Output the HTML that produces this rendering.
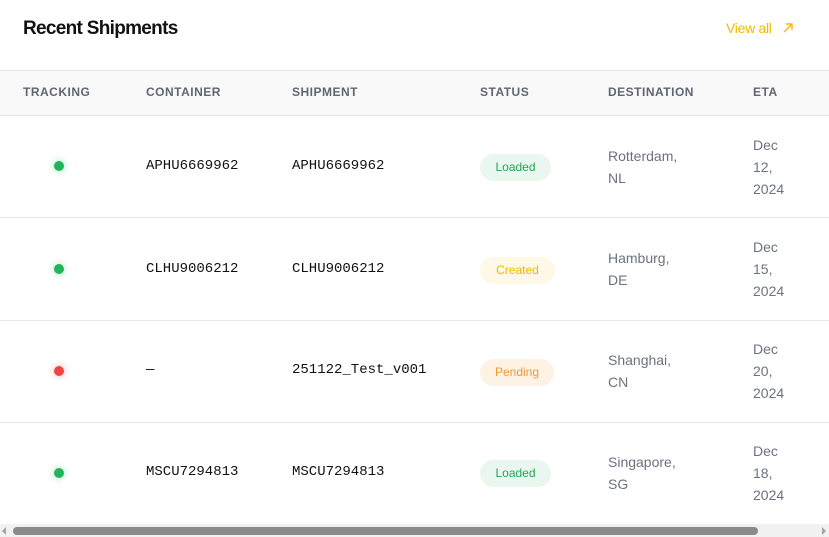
<!DOCTYPE html>
<html><head><style>
*{margin:0;padding:0;box-sizing:border-box}
body{width:829px;height:537px;background:#fff;position:relative;overflow:hidden;font-family:"Liberation Sans",sans-serif;color:#111827}
.a{position:absolute;white-space:nowrap}
.title{left:23px;top:18px;font-size:19px;font-weight:bold;letter-spacing:-0.7px;color:#111}
.view{left:726px;top:20px;font-size:14px;color:#f5b800;letter-spacing:-0.3px}
.thead{position:absolute;left:0;top:70px;width:829px;height:46px;background:#f9f9f9;border-top:1px solid #e5e5e5;border-bottom:1px solid #e5e5e5}
.th{top:85px;font-size:12px;color:#5f6673;letter-spacing:0.5px;font-weight:bold}
.row{position:absolute;left:0;width:829px;height:103px;border-bottom:1px solid #e5e7eb}
.dot{position:absolute;left:54px;width:10px;height:10px;border-radius:50%}
.g{background:#22b45a;box-shadow:0 0 6px 2px rgba(34,180,90,.2)}
.r{background:#ef4444;box-shadow:0 0 6px 2px rgba(239,68,68,.2)}
.mono{font-family:"Liberation Mono",monospace;font-size:14px;color:#111}
.badge{position:absolute;left:480px;height:27px;border-radius:14px;font-size:12px;line-height:27px;text-align:center}
.txt{font-size:14px;color:#6b7280;line-height:22px}
</style></head><body>
<div class="a title">Recent Shipments</div>
<div class="a view">View all &nbsp;&nbsp;<svg width="12" height="12" viewBox="0 0 12 12" style="vertical-align:-1px"><path d="M2 10L10 2M4 2H10V8" stroke="#f5b800" stroke-width="1.4" fill="none"/></svg></div>
<div class="thead"></div>
<div class="a th" style="left:23px">TRACKING</div>
<div class="a th" style="left:146px">CONTAINER</div>
<div class="a th" style="left:292px">SHIPMENT</div>
<div class="a th" style="left:480px">STATUS</div>
<div class="a th" style="left:608px">DESTINATION</div>
<div class="a th" style="left:753px">ETA</div>

<div class="row" style="top:115px"></div>
<div class="dot g" style="top:161px"></div>
<div class="a mono" style="left:146px;top:158px">APHU6669962</div>
<div class="a mono" style="left:292px;top:158px">APHU6669962</div>
<div class="badge" style="top:154px;width:71px;background:#e9f7ee;color:#22a455">Loaded</div>
<div class="a txt" style="left:608px;top:145px">Rotterdam,<br>NL</div>
<div class="a txt" style="left:753px;top:134px">Dec<br>12,<br>2024</div>

<div class="row" style="top:218px"></div>
<div class="dot g" style="top:264px"></div>
<div class="a mono" style="left:146px;top:261px">CLHU9006212</div>
<div class="a mono" style="left:292px;top:261px">CLHU9006212</div>
<div class="badge" style="top:257px;width:75px;background:#fef8e6;color:#f5b800">Created</div>
<div class="a txt" style="left:608px;top:247px">Hamburg,<br>DE</div>
<div class="a txt" style="left:753px;top:236px">Dec<br>15,<br>2024</div>

<div class="row" style="top:320px"></div>
<div class="dot r" style="top:366px"></div>
<div class="a mono" style="left:146px;top:362px">—</div>
<div class="a mono" style="left:292px;top:362px">251122_Test_v001</div>
<div class="badge" style="top:359px;width:74px;background:#fdf2e4;color:#ef9a35">Pending</div>
<div class="a txt" style="left:608px;top:349px">Shanghai,<br>CN</div>
<div class="a txt" style="left:753px;top:338px">Dec<br>20,<br>2024</div>

<div class="dot g" style="top:468px"></div>
<div class="a mono" style="left:146px;top:464px">MSCU7294813</div>
<div class="a mono" style="left:292px;top:464px">MSCU7294813</div>
<div class="badge" style="top:460px;width:71px;background:#e9f7ee;color:#22a455">Loaded</div>
<div class="a txt" style="left:608px;top:451px">Singapore,<br>SG</div>
<div class="a txt" style="left:753px;top:440px">Dec<br>18,<br>2024</div>

<div class="a" style="left:0;top:524px;width:829px;height:13px;background:#f1f1f1"></div>
<div class="a" style="left:2px;top:527px;width:0;height:0;border-top:4px solid transparent;border-bottom:4px solid transparent;border-right:4px solid #a3a3a3"></div>
<div class="a" style="left:822px;top:527px;width:0;height:0;border-top:4px solid transparent;border-bottom:4px solid transparent;border-left:4px solid #a3a3a3"></div>
<div class="a" style="left:13px;top:527px;width:745px;height:8px;border-radius:4px;background:#8a8a8a"></div>
</body></html>
